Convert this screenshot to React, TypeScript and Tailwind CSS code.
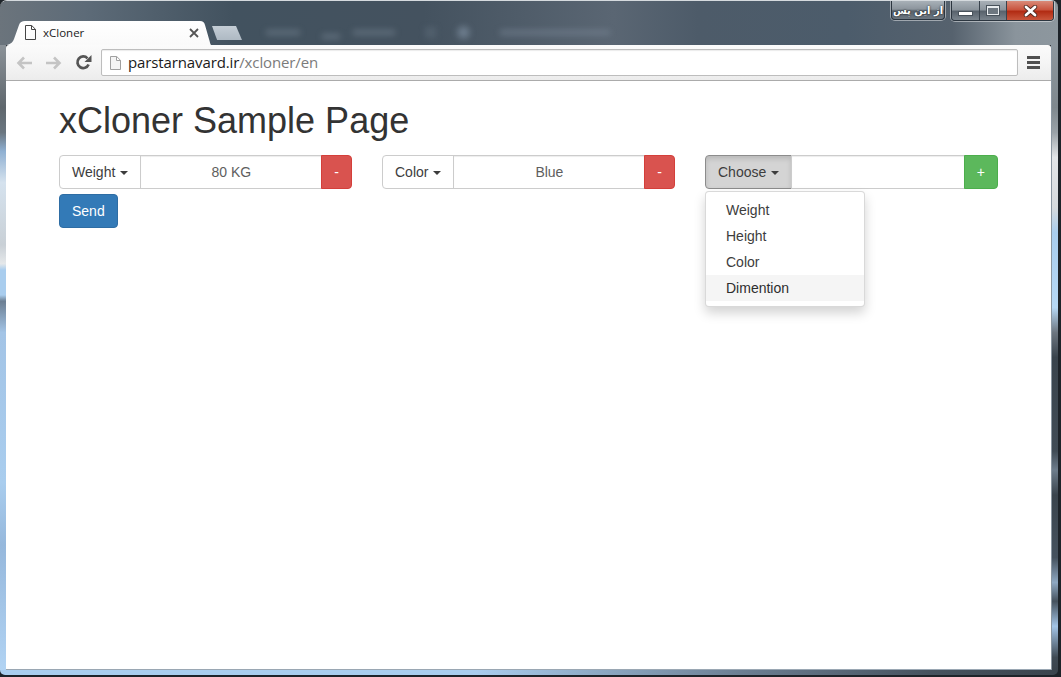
const sans = "font-['Liberation_Sans',Arial,sans-serif]";

function Caret() {
  return <span className="ml-[5px] inline-block align-middle border-x-[4px] border-t-[4px] border-x-transparent border-t-current" />;
}

function TitleBar() {
  return (
    <div className="h-[44px] shrink-0 flex flex-col bg-[linear-gradient(90deg,#6b747c_0%,#5d6b78_8%,#42525f_22%,#44525f_40%,#5a6673_58%,#4d5b69_66%,#4c5c6b_80%,#56626e_90%,#8a949c_96%,#8d979e_100%)]">
      <div className="h-[20px] shrink-0 flex justify-end items-start pr-[4px]">
        {/* caption buttons */}
        <div className="w-[54px] h-[19px] mr-[6px] flex items-center justify-center rounded-b-[4px] border border-t-0 border-[#2c3640] bg-[linear-gradient(180deg,#a8b0b7_0%,#8c959d_45%,#59636d_55%,#6d7780_100%)] shadow-[0_0_0_1px_rgba(255,255,255,0.45)]">
          <span dir="rtl" className="font-['DejaVu_Sans',sans-serif] text-[10px] font-bold text-white [text-shadow:0_0_2px_#000]">از این پس</span>
        </div>
        <div className="w-[103px] h-[20px] flex rounded-b-[4px] border border-t-0 border-[#2c3640] overflow-hidden shadow-[0_0_0_1px_rgba(255,255,255,0.45)]">
          <div className="w-[28px] flex items-center justify-center border-r border-[#39434d] bg-[linear-gradient(180deg,#a8b0b7_0%,#8c959d_45%,#59636d_55%,#7a848d_100%)]">
            <span className="mt-[5px] w-[13px] h-[3px] bg-white border border-[#48525b] box-content" />
          </div>
          <div className="w-[27px] flex items-center justify-center border-r border-[#39434d] bg-[linear-gradient(180deg,#a8b0b7_0%,#8c959d_45%,#59636d_55%,#7a848d_100%)]">
            <span className="w-[12px] h-[9px] border border-t-2 border-[#e8ecef] bg-[#6d7780] outline outline-[#48525b]" />
          </div>
          <div className="flex-1 flex items-center justify-center bg-[linear-gradient(180deg,#d98a78_0%,#c9553f_45%,#b22c14_55%,#c9563c_100%)]">
            <svg width="15" height="12" viewBox="0 0 15 12">
              <path d="M3 2l9 8M12 2l-9 8" stroke="#4d2a22" strokeWidth="4.4" strokeLinecap="round" />
              <path d="M3 2l9 8M12 2l-9 8" stroke="#fff" strokeWidth="2.8" strokeLinecap="round" />
            </svg>
          </div>
        </div>
      </div>

      <div className="h-[24px] flex items-end pl-[7px] overflow-hidden">
        {/* active tab */}
        <div className="relative w-[204px] h-[24px] shrink-0 flex items-center">
          <svg className="absolute inset-0" width="204" height="24" viewBox="0 0 204 24">
            <defs>
              <linearGradient id="tabFill" x1="0" y1="0" x2="0" y2="1">
                <stop offset="0" stopColor="#ffffff" />
                <stop offset="1" stopColor="#fafafa" />
              </linearGradient>
            </defs>
            <path d="M0 24 C4 23 6 21 7 18 L12 4 C13 1 15 0 18 0 L193 0 C196 0 197 1 198 4 L202 18 C203 21 203 23 204 24 Z" fill="url(#tabFill)" />
          </svg>
          <svg className="relative ml-[18px] mt-[-1px]" width="11" height="15" viewBox="0 0 11 15" fill="none" stroke="#444" strokeWidth="1">
            <path d="M.5.5h6.200l3.800 3.800v10.200H.5zM6.500.5v4h4" />
          </svg>
          <span className="relative ml-[7px] text-[11.5px] text-[#222] font-['Open_Sans',sans-serif]">xCloner</span>
          <svg className="relative ml-[auto] mr-[12px]" width="10" height="10" viewBox="0 0 10 10">
            <path d="M1 1l8 8M9 1l-8 8" stroke="#555" strokeWidth="1.800" />
          </svg>
        </div>
        {/* new tab button */}
        <div className="ml-[1px] mb-[5px] w-[30px] h-[14px] shrink-0 bg-[linear-gradient(180deg,#c4cdd5_0%,#aeb9c3_100%)] [clip-path:polygon(0_0,80%_0,100%_100%,17%_100%)]" />
        {/* whatever sits blurred behind the glass */}
        <div className="flex items-center h-[20px] mb-[3px] blur-[3px] opacity-50">
          <span className="ml-[24px] w-[34px] h-[5px] bg-[#7f8d9b]" />
          <span className="ml-[22px] mt-[8px] w-[18px] h-[5px] bg-[#7f8d9b]" />
          <span className="ml-[13px] w-[42px] h-[5px] bg-[#7f8d9b]" />
          <span className="ml-[30px] w-[11px] h-[11px] bg-[#5f6e7c]" />
          <span className="ml-[21px] w-[13px] h-[13px] rounded-full bg-[#8ea0b3]" />
          <span className="ml-[30px] w-[110px] h-[5px] bg-[#8290a0]" />
        </div>
      </div>
    </div>
  );
}

function Toolbar() {
  return (
    <div className="h-[36px] shrink-0 flex items-center rounded-t-[3px] bg-[linear-gradient(180deg,#fbfbfb_0%,#f5f5f5_50%,#ececec_100%)] border-b border-[#ababab] pl-[10px]">
      <svg width="17" height="14" viewBox="0 0 17 14" fill="none" stroke="#c4c4c4" strokeWidth="2.600">
        <path d="M16 7H3M8 1.500L2.500 7 8 12.500" />
      </svg>
      <svg className="ml-[12px]" width="17" height="14" viewBox="0 0 17 14" fill="none" stroke="#c4c4c4" strokeWidth="2.600">
        <path d="M1 7h13M9 1.500L14.500 7 9 12.500" />
      </svg>
      <svg className="ml-[13px]" width="17" height="17" viewBox="0 0 17 17" fill="none">
        <path d="M13.600 10.500A5.800 5.800 0 1 1 12.500 4.300" stroke="#555" strokeWidth="2.700" />
        <path d="M16.500 1v7h-7z" fill="#555" />
      </svg>
      <div className="ml-[9px] w-[917px] h-[27px] flex items-center bg-white border border-[#bdbdbd] rounded-[2px] shadow-[inset_0_1px_1px_rgba(0,0,0,0.08)]">
        <svg className="ml-[8px]" width="11" height="14" viewBox="0 0 11 14" fill="#f4f4f4" stroke="#a0a0a0" strokeWidth="1">
          <path d="M.5.5h6.200l3.800 3.800v9.200H.5zM6.500.5v4h4" />
        </svg>
        <span className="ml-[7px] text-[15px] leading-none tracking-[-0.12px] font-['Open_Sans',sans-serif] text-[#1a1a1a]">
          parstarnavard.ir<span className="text-[#7b7b7b]">/xcloner/en</span>
        </span>
      </div>
      <div className="ml-[9px] w-[13px] flex flex-col gap-[2px]">
        <span className="h-[3px] bg-[#505050]" />
        <span className="h-[3px] bg-[#505050]" />
        <span className="h-[3px] bg-[#505050]" />
      </div>
    </div>
  );
}

function FieldGroup({
  label,
  value,
  action,
  actionClass,
  open = false,
}: {
  label: string;
  value?: string;
  action: string;
  actionClass: string;
  open?: boolean;
}) {
  return (
    <div className="relative w-[293px] h-[34px] flex text-[14px] leading-[20px]">
      <button
        className={`h-[34px] px-[12px] shrink-0 border rounded-l-[4px] text-[#3d3d3d] ${
          open ? "bg-[#d4d4d4] border-[#8c8c8c] shadow-[inset_0_3px_5px_rgba(0,0,0,0.125)]" : "bg-white border-[#ccc]"
        }`}
      >
        {label}
        <Caret />
      </button>
      <div className="flex-1 -ml-px h-[34px] flex items-center justify-center border border-[#ccc] bg-white text-[#5e5e5e] shadow-[inset_0_1px_1px_rgba(0,0,0,0.075)]">
        {value}
      </div>
      <button className={`h-[34px] px-[12px] shrink-0 -ml-px rounded-r-[4px] border text-white ${actionClass}`}>{action}</button>
      {open && (
        <ul className="absolute left-0 top-[36px] z-10 w-[160px] py-[5px] bg-white border border-black/15 rounded-[4px] shadow-[0_6px_12px_rgba(0,0,0,0.175)] text-[#3d3d3d]">
          <li className="h-[26px] px-[20px] leading-[26px]">Weight</li>
          <li className="h-[26px] px-[20px] leading-[26px]">Height</li>
          <li className="h-[26px] px-[20px] leading-[26px]">Color</li>
          <li className="h-[26px] px-[20px] leading-[26px] bg-[#f5f5f5] text-[#2e2e2e]">Dimention</li>
        </ul>
      )}
    </div>
  );
}

export default function App() {
  return (
    <div className={`w-[1061px] h-[677px] overflow-hidden bg-[#1d2329] ${sans}`}>
      <div className="w-[1058px] h-[675px] flex flex-col rounded-t-[7px] rounded-b-[5px] overflow-hidden border-t border-[#d5dade]">
        <TitleBar />
        <div className="flex-1 flex min-h-0">
          {/* left glass edge */}
          <div className="w-[6px] shrink-0 bg-[linear-gradient(180deg,#8b9298_0%,#5f676d_10%,#6a7680_14%,#8fb0d2_17%,#d5e2ee_22%,#c9d0d6_32%,#e5e8ea_35%,#a9cdee_36%,#a9cdee_40%,#6c7f93_41%,#a3c4e6_46%,#a9cdee_70%,#96b8dc_80%,#b1d3f3_100%)]" />
          <div className="flex-1 flex flex-col min-w-0">
            <Toolbar />
            <main className="flex-1 bg-white pl-[53px] pt-[20px] border-b border-[#9aa7b3]">
              <h1 className="text-[36px] leading-[40px] font-normal text-[#333] mb-[14px]">xCloner Sample Page</h1>
              <div className="flex gap-[30px]">
                <FieldGroup label="Weight" value="80 KG" action="-" actionClass="bg-[#d9534f] border-[#d43f3a]" />
                <FieldGroup label="Color" value="Blue" action="-" actionClass="bg-[#d9534f] border-[#d43f3a]" />
                <FieldGroup label="Choose" action="+" actionClass="bg-[#5cb85c] border-[#4cae4c]" open />
              </div>
              <button className="mt-[5px] h-[34px] px-[12px] rounded-[4px] border border-[#2e6da4] bg-[#337ab7] text-white text-[14px] leading-[20px]">
                Send
              </button>
            </main>
          </div>
          {/* right glass edge */}
          <div className="w-[7px] shrink-0 bg-[linear-gradient(180deg,#8d979e_0%,#7f888e_10%,#9aa2a8_14%,#e3e6e9_18%,#d6dadd_26%,#a9cdee_30%,#b6d8f5_42%,#6d7680_46%,#3a444d_50%,#414c56_65%,#6e7d8c_68%,#3a444d_72%,#46525e_82%,#8fa8c2_86%,#46525e_89%,#a3c4e6_93%,#3f4a54_98%,#3a444d_100%)] border-l border-[#8a96a1]" />
        </div>
        <div className="h-[5px] shrink-0 bg-[linear-gradient(90deg,#a9cdee_0%,#a9cdee_45%,#6c7f93_70%,#46525e_88%,#3a444d_100%)]" />
      </div>
    </div>
  );
}
